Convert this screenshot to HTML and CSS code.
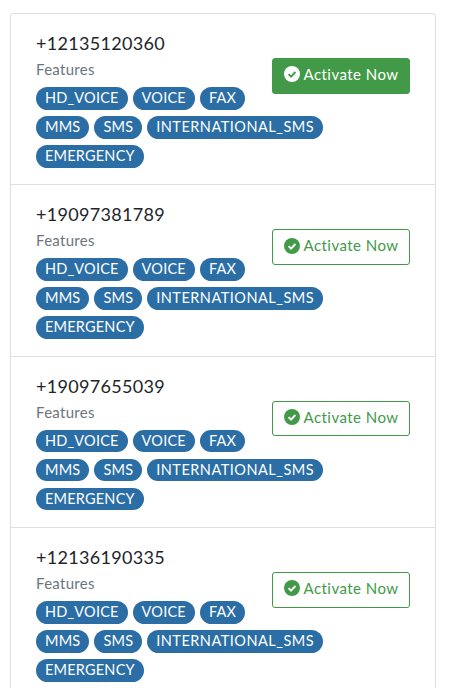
FILE: index.html
```html
<!DOCTYPE html>
<html lang="en">
<head>
<meta charset="utf-8">
<title>Numbers</title>
<link rel="stylesheet" href="styles.css">
</head>
<body>
<svg class="defs" width="0" height="0" aria-hidden="true"><defs><symbol id="check" viewBox="0 0 16 16"><circle cx="8" cy="8" r="8" fill="currentColor"/><path class="tick" d="M4.6 8.2l2.4 2.4 4.4-4.6" fill="none" stroke-width="1.9"/></symbol></defs></svg>
<main class="card">
  <section class="item">
    <button class="btn solid"><svg class="icon"><use href="#check"/></svg><span class="btn-text">Activate Now</span></button>
    <div class="phone">+12135120360</div>
    <div class="label">Features</div>
    <div class="badges"><span class="badge">HD_VOICE</span><span class="badge">VOICE</span><span class="badge">FAX</span><span class="badge">MMS</span><span class="badge">SMS</span><span class="badge long">INTERNATIONAL_SMS</span><span class="badge">EMERGENCY</span></div>
  </section>
  <section class="item">
    <button class="btn"><svg class="icon"><use href="#check"/></svg><span class="btn-text">Activate Now</span></button>
    <div class="phone">+19097381789</div>
    <div class="label">Features</div>
    <div class="badges"><span class="badge">HD_VOICE</span><span class="badge">VOICE</span><span class="badge">FAX</span><span class="badge">MMS</span><span class="badge">SMS</span><span class="badge long">INTERNATIONAL_SMS</span><span class="badge">EMERGENCY</span></div>
  </section>
  <section class="item">
    <button class="btn"><svg class="icon"><use href="#check"/></svg><span class="btn-text">Activate Now</span></button>
    <div class="phone">+19097655039</div>
    <div class="label">Features</div>
    <div class="badges"><span class="badge">HD_VOICE</span><span class="badge">VOICE</span><span class="badge">FAX</span><span class="badge">MMS</span><span class="badge">SMS</span><span class="badge long">INTERNATIONAL_SMS</span><span class="badge">EMERGENCY</span></div>
  </section>
  <section class="item">
    <button class="btn"><svg class="icon"><use href="#check"/></svg><span class="btn-text">Activate Now</span></button>
    <div class="phone">+12136190335</div>
    <div class="label">Features</div>
    <div class="badges"><span class="badge">HD_VOICE</span><span class="badge">VOICE</span><span class="badge">FAX</span><span class="badge">MMS</span><span class="badge">SMS</span><span class="badge long">INTERNATIONAL_SMS</span><span class="badge">EMERGENCY</span></div>
  </section>
</main>
</body>
</html>
```
FILE: styles.css
```css
* { box-sizing: border-box; }
body {
  margin: 0;
  padding: 13px 13px 0 10px;
  height: 688px;
  overflow: hidden;
  background: #fff;
  font-family: "Lato", "Noto Sans", sans-serif;
  color: #212529;
}
.defs { position: absolute; }
.card {
  border: 1px solid #dfdfdf;
  border-bottom: 0;
  border-radius: 4px 4px 0 0;
}
.item {
  height: 171.4px;
  padding: 16px 25px 0 25px;
  border-bottom: 1px solid #dfdfdf;
}
.phone { font-size: 18px; line-height: 27px; letter-spacing: .3px; }
.label { font-size: 15px; line-height: 21px; margin-top: 2px; color: #6c757d; letter-spacing: .3px; }
.badges { margin-top: 7px; line-height: 0; }
.badge {
  display: inline-block;
  height: 22.5px;
  margin: 0 5px 6.5px 0;
  padding: 0 9px;
  border-radius: 12px;
  background: #2a6ea5;
  color: #fff;
  font-size: 14.5px;
  line-height: 22px;
  letter-spacing: .2px;
  white-space: nowrap;
}
.badge.long { letter-spacing: .5px; }
.btn {
  --tick: #fff;
  float: right;
  display: flex;
  align-items: center;
  justify-content: center;
  gap: 4px;
  width: 138px;
  height: 35.5px;
  margin-top: 28px;
  padding: 0 0 3px;
  border: 1px solid #429a48;
  border-radius: 3px;
  background: #fff;
  color: #429a48;
  font: 15px "Lato", "Noto Sans", sans-serif;
  letter-spacing: .45px;
}
.btn-text { position: relative; top: -.5px; }
.btn .icon { width: 16px; height: 16px; flex: none; }
.tick { stroke: var(--tick); }
.btn.solid { --tick: #429a48; background: #429a48; color: #fff; }
```
